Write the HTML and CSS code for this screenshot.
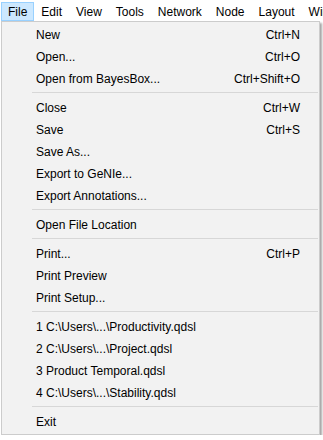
FILE: index.html
```html
<!DOCTYPE html>
<html lang="en">
<head>
  <meta charset="UTF-8">
  <title>File menu</title>
  <link rel="stylesheet" href="styles.css">
</head>
<body>
  <div class="menubar">
    <span class="top-item open">File</span>
    <span class="top-item">Edit</span>
    <span class="top-item">View</span>
    <span class="top-item">Tools</span>
    <span class="top-item">Network</span>
    <span class="top-item">Node</span>
    <span class="top-item">Layout</span>
    <span class="top-item">Window</span>
  </div>

  <div class="dropdown">
    <div class="item"><span>New</span><span>Ctrl+N</span></div>
    <div class="item"><span>Open...</span><span>Ctrl+O</span></div>
    <div class="item"><span>Open from BayesBox...</span><span>Ctrl+Shift+O</span></div>
    <div class="sep"></div>
    <div class="item"><span>Close</span><span>Ctrl+W</span></div>
    <div class="item"><span>Save</span><span>Ctrl+S</span></div>
    <div class="item"><span>Save As...</span></div>
    <div class="item"><span>Export to GeNIe...</span></div>
    <div class="item"><span>Export Annotations...</span></div>
    <div class="sep"></div>
    <div class="item"><span>Open File Location</span></div>
    <div class="sep"></div>
    <div class="item"><span>Print...</span><span>Ctrl+P</span></div>
    <div class="item"><span>Print Preview</span></div>
    <div class="item"><span>Print Setup...</span></div>
    <div class="sep"></div>
    <div class="item"><span>1 C:\Users\...\Productivity.qdsl</span></div>
    <div class="item"><span>2 C:\Users\...\Project.qdsl</span></div>
    <div class="item"><span>3 Product Temporal.qdsl</span></div>
    <div class="item"><span>4 C:\Users\...\Stability.qdsl</span></div>
    <div class="sep"></div>
    <div class="item"><span>Exit</span></div>
  </div>
</body>
</html>
```

FILE: styles.css
```css
body {
  margin: 0;
  background-color: #fff;
  font-family: "Liberation Sans", Arial, sans-serif;
  font-size: 12px;
  color: #000;
  overflow: hidden;
}
.menubar {
  display: flex;
  height: 21px;
  padding: 2px 0 0 1px;
  box-sizing: border-box;
  white-space: nowrap;
  overflow: hidden;
}
.top-item {
  height: 19px;
  line-height: 18px;
  padding: 0 6px;
  border: 1px solid transparent;
  box-sizing: border-box;
}
.top-item.open {
  background-color: #cce8ff;
  border-color: #99d1ff;
}
.dropdown {
  width: 319px;
  margin-left: 1px;
  padding: 1px 0 2px 0;
  box-sizing: border-box;
  background-color: #f2f2f2;
  border: 1px solid #cccccc;
  box-shadow: 2px 2px 2px rgba(0,0,0,0.35);
}
.item {
  display: flex;
  justify-content: space-between;
  height: 22px;
  line-height: 24px;
  padding: 0 19px 0 34px;
  white-space: nowrap;
}
.sep {
  height: 0;
  margin: 3px 1px 3px 30px;
  border-top: 1px solid #d7d7d7;
}
```
